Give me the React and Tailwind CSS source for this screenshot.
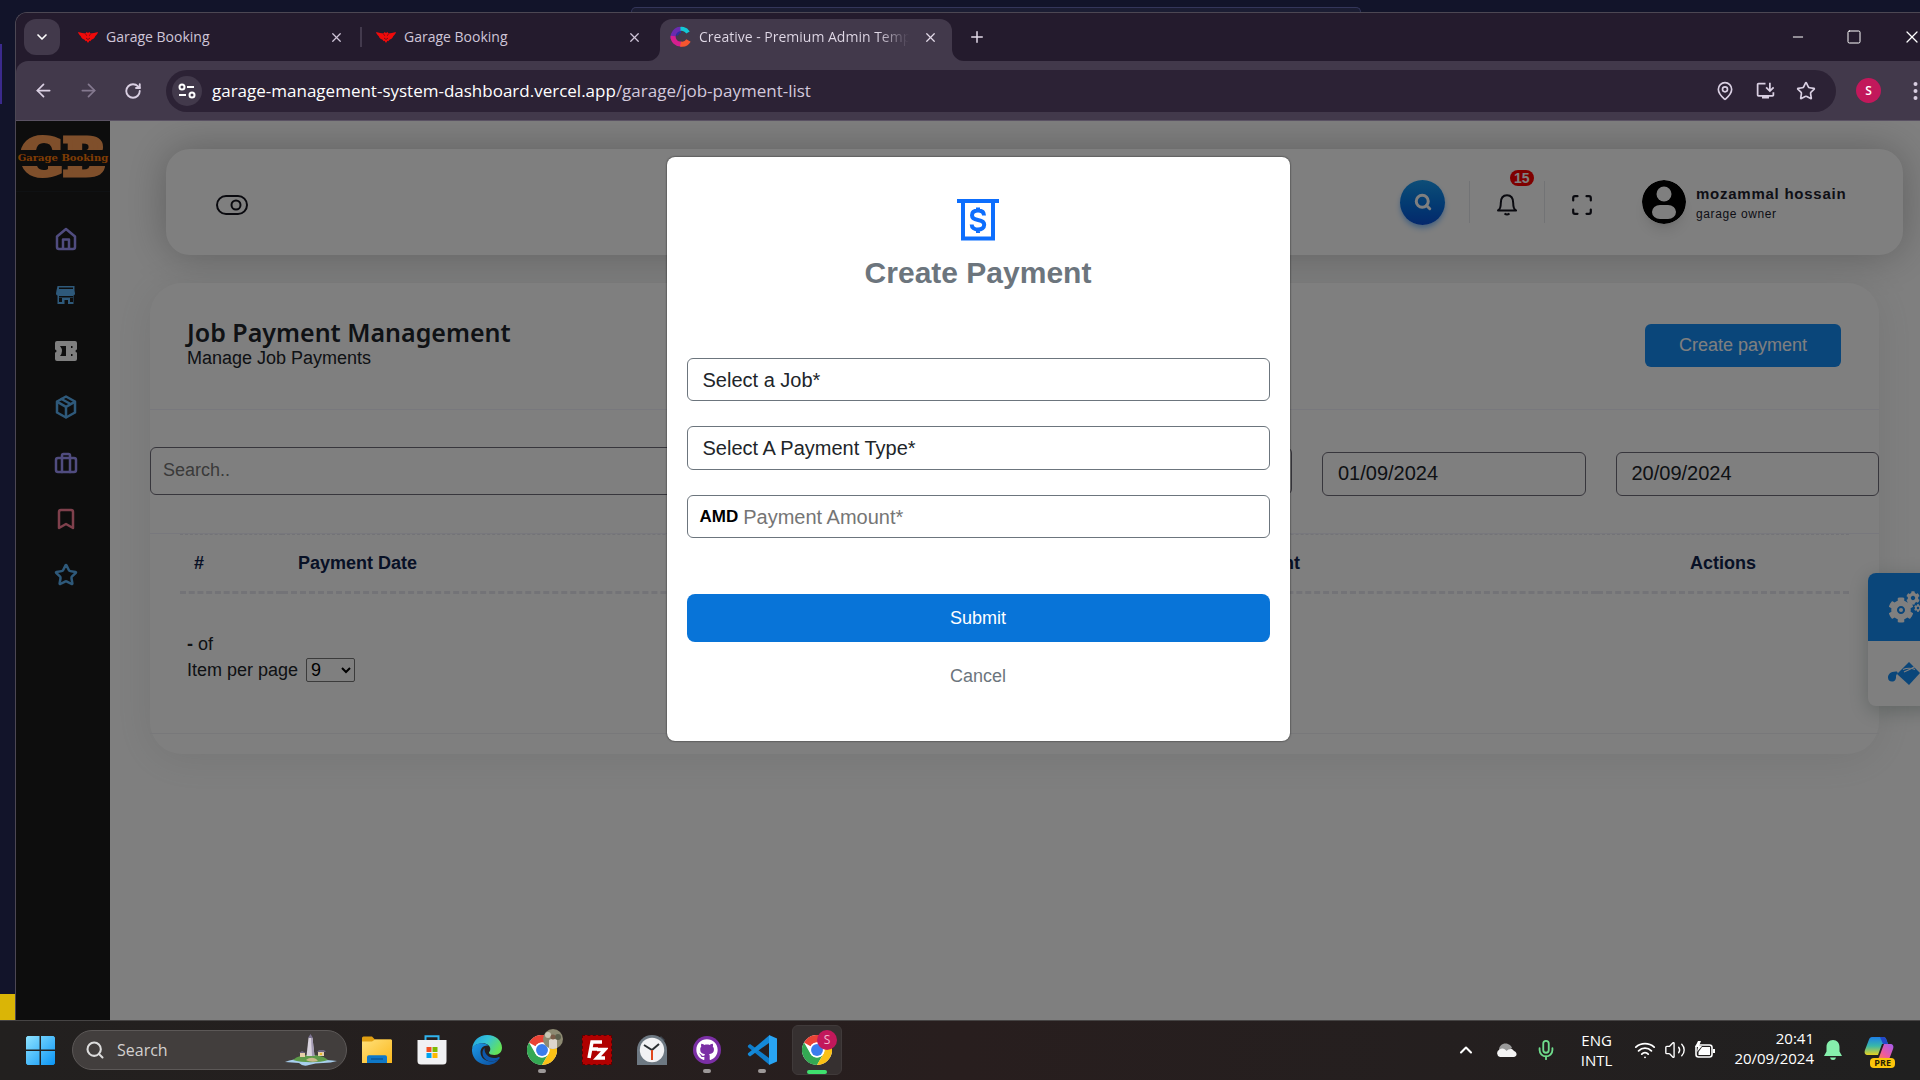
import React from "react";
import {
  ArrowLeft, ArrowRight, RotateCw, X, Plus, ChevronDown, ChevronUp, MapPin, Star, Minus, Square,
  Search, Bookmark, Mic, Volume2, Wifi,
} from "lucide-react";
import { FaGithub, FaCog } from "react-icons/fa";
import { MdOutlineInstallDesktop } from "react-icons/md";

const UI = "font-['Open_Sans',sans-serif]";
const PAGE = "font-['Liberation_Sans',Arial,sans-serif]";

/* ---------- brand marks ---------- */

function WingsMark() {
  return (
    <svg width="20" height="12" viewBox="0 0 20 12" fill="#f00a0a" aria-hidden="true">
      <path d="M0 1c3 1 5.500 1.200 7.500 1.500L8.500 1l1.500 1 1.500-1 1 1.500C14.500 2.200 17 2 20 1c-.6 2-1.600 3.400-3 4.500.2.600-1 1.800-2 2.500l-1.600.8-1 1.500-.9-.5L10 12l-1.500-2.200-.9.5-1-1.500L5 8C4 7.300 2.800 6.100 3 5.500 1.600 4.400.6 3 0 1z" />
      <path d="M7.500 3.500l1.500 1M12.500 3.500l-1.500 1M8 7l2 1.500L12 7" stroke="#5a0a14" strokeWidth="0.8" fill="none" />
    </svg>
  );
}

function CreativeMark() {
  return (
    <svg width="21" height="24" viewBox="0 0 21 21" fill="none" aria-hidden="true">
      <path d="M18 6A7.500 7.500 0 0 0 7.500 3.500" stroke="#12c9d6" strokeWidth="4" />
      <path d="M10.500 2.800A7.800 7.800 0 0 0 3.200 12" stroke="#6a2bb0" strokeWidth="5" />
      <path d="M3 9.500a7.500 7.500 0 0 0 8.500 8" stroke="#d61f8f" strokeWidth="5" />
      <path d="M10.500 17.500a7.500 7.500 0 0 0 8-3.500" stroke="#f5562f" strokeWidth="5" />
      <path d="M7 9c.5-2 2-3.200 4-3.400" stroke="#2b2fa0" strokeWidth="2" />
    </svg>
  );
}

function ChromeMark() {
  return (
    <svg width="30" height="30" viewBox="0 0 48 48" aria-hidden="true">
      <circle cx="24" cy="24" r="24" fill="#fff" />
      <path d="M3.200 12A24 24 0 0 1 44.800 12H24a12 12 0 0 0-10.400 6z" fill="#ea4335" />
      <path d="M3.200 12A24 24 0 0 0 24 48l10.400-18A12 12 0 0 1 13.600 30z" fill="#34a853" />
      <path d="M44.800 12A24 24 0 0 1 24 48l10.400-18A12 12 0 0 0 34.400 18 12 12 0 0 0 24 12z" fill="#fbc116" />
      <circle cx="24" cy="24" r="12" fill="#fff" />
      <circle cx="24" cy="24" r="9.500" fill="#3b7ded" />
    </svg>
  );
}

function WindowsMark() {
  return (
    <svg width="29" height="29" viewBox="0 0 30 30" aria-hidden="true">
      <defs>
        <linearGradient id="win" x1="0" y1="0" x2="1" y2="1">
          <stop offset="0" stopColor="#8fe3ff" />
          <stop offset="1" stopColor="#0a95f5" />
        </linearGradient>
      </defs>
      <path d="M1.500 0H14v14H0V1.500zM15.500 0H28.500L30 1.500V14H15.500zM0 15.500h14V30H1.500L0 28.500zM15.500 15.500H30v13L28.500 30h-13z" fill="url(#win)" />
    </svg>
  );
}

function FolderMark() {
  return (
    <svg width="30" height="28" viewBox="0 0 30 28" aria-hidden="true">
      <defs>
        <linearGradient id="fold" x1="0" y1="0" x2="1" y2="1">
          <stop offset="0" stopColor="#ffe07a" />
          <stop offset="1" stopColor="#fbb81c" />
        </linearGradient>
      </defs>
      <path d="M0 2a1.500 1.500 0 0 1 1.500-1.500H10l3 3h16V10H0z" fill="#e09f12" />
      <path d="M0 5.500h10l3-2h16a1 1 0 0 1 1 1V27H0z" fill="url(#fold)" />
      <path d="M5 21a1.800 1.800 0 0 1 1.800-1.800h16.400A1.800 1.800 0 0 1 25 21v6H5z" fill="#0f78c8" />
      <path d="M9 23h12" stroke="#0a4f8c" strokeWidth="1.200" />
    </svg>
  );
}

function StoreMark() {
  return (
    <svg width="30" height="30" viewBox="0 0 30 30" aria-hidden="true">
      <path d="M8.500 6V1.200h13V6" fill="none" stroke="#30b4ee" strokeWidth="2" />
      <path d="M.5 5h29v21a3.500 3.500 0 0 1-3.500 3.500H4A3.500 3.500 0 0 1 .5 26z" fill="#f1f1f3" />
      <path d="M9.500 12h5v5h-5z" fill="#f25022" />
      <path d="M15.500 12h5v5h-5z" fill="#7fba00" />
      <path d="M9.500 18h5v5h-5z" fill="#00a4ef" />
      <path d="M15.500 18h5v5h-5z" fill="#ffb900" />
    </svg>
  );
}

function EdgeMark() {
  return (
    <svg width="30" height="30" viewBox="0 0 30 30" aria-hidden="true">
      <defs>
        <linearGradient id="edgeTop" x1="0" y1="0" x2="1" y2="0.5">
          <stop offset="0" stopColor="#1f9fe0" />
          <stop offset="0.5" stopColor="#35c3d8" />
          <stop offset="1" stopColor="#63e25a" />
        </linearGradient>
        <linearGradient id="edgeLow" x1="0" y1="0" x2="1" y2="1">
          <stop offset="0" stopColor="#1d9be8" />
          <stop offset="1" stopColor="#0a4a9c" />
        </linearGradient>
      </defs>
      <path d="M0 14C1 5.500 7 0 15.200 0 24 0 30 6 30 12.800c0 4.500-3.200 7.200-7.500 7.200-3 0-5.500-1-5.500-2.300 0-.9 1.300-1.200 1.300-3.700 0-3.300-3.200-5.800-7.500-5.800C5.500 8.200 1.500 10.500 0 14z" fill="url(#edgeTop)" />
      <path d="M0 14c1.500-3.800 5.500-5.800 10-5.800 3 0 5.300 1 6.600 2.400C12 10 8.500 13 8.500 17c0 6 5 9.500 10.500 9.500 3 0 5.500-.8 8-2.500C24.500 27.800 20.300 30 15.500 30 6.500 30-.6 23 0 14z" fill="url(#edgeLow)" />
      <path d="M12.500 13c-1.400 1.400-2 3-2 5 0 5.500 5 9 10 8.300 2.500-.3 4.800-1.200 6.800-2.600 1-.7.300-2-1-1.500-7 2.700-14-1.400-13.800-9.200z" fill="#0d57ab" />
    </svg>
  );
}

function ClockMark() {
  return (
    <svg width="30" height="30" viewBox="0 0 30 30" aria-hidden="true">
      <path d="M24 1l4 4-3 3-4-4z" fill="#3c434b" />
      <path d="M0 30V15a15 15 0 0 1 30 0v15z" fill="#6d7882" />
      <circle cx="15" cy="15" r="12.200" fill="#f2f2f4" />
      <path d="M7 10l8 5 7-6" fill="none" stroke="#2b2f33" strokeWidth="2" />
      <path d="M15 15v10" stroke="#e0461c" strokeWidth="2" />
    </svg>
  );
}

function CodeMark() {
  return (
    <svg width="30" height="30" viewBox="0 0 30 30" aria-hidden="true">
      <path d="M1 10.500l2-1.500L22 23v6.500L.8 12z" fill="#0f7dcb" />
      <path d="M.8 18.500L22 .5V8L3 21.500l-2-1.500z" fill="#1489d8" />
      <path d="M22 0l8 3.500v23L22 30z" fill="#29a5f4" />
    </svg>
  );
}

function IslandMark() {
  return (
    <svg width="54" height="32" viewBox="0 0 54 32" aria-hidden="true">
      <path d="M1 28q10-4 27-3t25 2q-6 2-14 2t-14 2-10-2z" fill="#a8cfee" />
      <path d="M9 26c4-4 10-5 18-5s14 2 17 5c-8 3-26 3-35 0z" fill="#5e9a4a" />
      <path d="M22 26c4-3 9-3 12 1-4 1-9 1-12-1z" fill="#c9b98a" />
      <path d="M24.500 4h4l2 18h-8z" fill="#d9d3de" />
      <path d="M27 4h1.500l2 18H28z" fill="#a39ab3" />
      <path d="M24 4l2.500-4L29 4z" fill="#7c7390" />
      <path d="M16 19h5v4h-5zM34 18h6v4h-6z" fill="#e6cfa8" />
      <path d="M15 19l3-2 4 2zM33 18l2-2h5l2 2z" fill="#6b6480" />
      <path d="M36 19h2v2h-2z" fill="#e8b92f" />
    </svg>
  );
}

function CopilotMark() {
  return (
    <svg width="30" height="24" viewBox="0 0 30 24" aria-hidden="true">
      <defs>
        <linearGradient id="cpA" x1="0" y1="0" x2="0" y2="1">
          <stop offset="0" stopColor="#1d7fe8" />
          <stop offset="0.5" stopColor="#39b8a8" />
          <stop offset="1" stopColor="#e8d21f" />
        </linearGradient>
        <linearGradient id="cpB" x1="1" y1="0" x2="0" y2="1">
          <stop offset="0" stopColor="#a35cf0" />
          <stop offset="0.6" stopColor="#ef5a9d" />
          <stop offset="1" stopColor="#f98a3c" />
        </linearGradient>
      </defs>
      <path d="M8 1h11c2 0 3 1 3.500 3L24 8h-6l-4 11H4c-3 0-4-2-3-5L5 3.500C5.500 2 6.500 1 8 1z" fill="url(#cpA)" />
      <path d="M16 1h3c2 0 3 1 3.500 3L24 8h-5z" fill="#2348c8" />
      <path d="M20 8h6c3 0 4 2 3 5l-3 8c-.5 1.500-1.500 2-3 2H12c2 0 3-1 3.500-3z" fill="url(#cpB)" />
    </svg>
  );
}

/* ---------- browser frame ---------- */

function Tab({ icon, title, divider }) {
  return (
    <div className="flex w-[298px] shrink-0 items-center pl-3.5 text-[#cfc5d8]">
      <span className="flex w-5 justify-center">{icon}</span>
      <span className="ml-2 flex-1 truncate text-sm">{title}</span>
      <button aria-label={"Close " + title} className="mr-4 flex"><X size={15} strokeWidth={2} /></button>
      <span className={divider ? "h-5 w-0.5 bg-[#433a4d]" : "h-5 w-0.5"} />
    </div>
  );
}

function TabStrip() {
  return (
    <div className={"flex h-12 items-stretch bg-[#241b2d] " + UI}>
      <button aria-label="Search tabs" className="my-1.5 ml-2 flex w-9 items-center justify-center rounded-xl bg-[#42394b] text-white">
        <ChevronDown size={16} strokeWidth={2.5} />
      </button>
      <div className="w-1" />
      <Tab icon={<WingsMark />} title="Garage Booking" divider />
      <Tab icon={<WingsMark />} title="Garage Booking" />
      <div className="relative mt-1.5 flex w-[292px] shrink-0 items-center rounded-t-xl bg-[#42394b] pb-1.5 pl-2.5 pr-3.5 text-[#e2dae8]">
        <svg className="absolute bottom-0 -left-3" width="12" height="12" aria-hidden="true"><path d="M12 0v12H0A12 12 0 0 0 12 0z" fill="#42394b" /></svg>
        <svg className="absolute bottom-0 -right-3" width="12" height="12" aria-hidden="true"><path d="M0 0v12h12A12 12 0 0 1 0 0z" fill="#42394b" /></svg>
        <CreativeMark />
        <span className="ml-2 w-[210px] overflow-hidden whitespace-nowrap bg-linear-to-r from-[#e2dae8] from-85% to-transparent bg-clip-text text-sm text-transparent">
          Creative - Premium Admin Temp
        </span>
        <button aria-label="Close tab" className="ml-auto flex"><X size={15} strokeWidth={2} /></button>
      </div>
      <button aria-label="New tab" className="ml-4 flex items-center text-[#e2dae8]"><Plus size={18} strokeWidth={2} /></button>
      <div className="ml-auto flex items-center gap-10 pr-[18px] text-white">
        <button aria-label="Minimize"><Minus size={16} strokeWidth={1.5} /></button>
        <button aria-label="Maximize"><Square size={16} strokeWidth={1.5} /></button>
        <button aria-label="Close window"><X size={20} strokeWidth={1.5} /></button>
      </div>
    </div>
  );
}

function Toolbar() {
  return (
    <div className={"flex h-[60px] items-center rounded-tl-xl border-b border-[#5a5263] bg-[#42394b] pl-[17px] pr-[22px] text-[#d9cfe2] " + UI}>
      <button aria-label="Back"><ArrowLeft size={21} /></button>
      <button aria-label="Forward" className="ml-6 text-[#84798f]"><ArrowRight size={21} /></button>
      <button aria-label="Reload" className="ml-[25px]"><RotateCw size={18} strokeWidth={2.5} /></button>
      <div className="ml-6 flex h-[42px] flex-1 items-center rounded-full bg-[#2c2235] pl-1.5 pr-5">
        <button aria-label="Site information" className="flex h-[30px] w-[30px] items-center justify-center rounded-full bg-[#42394b]">
          <svg width="18" height="16" viewBox="0 0 18 16" fill="none" stroke="#fff" strokeWidth="2" aria-hidden="true">
            <circle cx="4" cy="4" r="2.500" /><path d="M9 4h7M1 12h7" /><circle cx="14" cy="12" r="2.500" />
          </svg>
        </button>
        <span className="ml-2.5 flex-1 text-[17px] text-white">
          garage-management-system-dashboard.vercel.app<span className="text-[#d3c9dc]">/garage/job-payment-list</span>
        </span>
        <span className="flex items-center gap-5">
          <MapPin size={20} /><MdOutlineInstallDesktop size={21} /><Star size={20} />
        </span>
      </div>
      <span className="ml-5 flex h-[25px] w-[25px] items-center justify-center rounded-full bg-[#c2185b] text-xs font-semibold text-white">S</span>
      <button aria-label="Browser menu" className="ml-8">
        <svg width="5" height="18" viewBox="0 0 5 18" fill="#d9cfe2" aria-hidden="true"><circle cx="2.500" cy="2" r="2" /><circle cx="2.500" cy="9" r="2" /><circle cx="2.500" cy="16" r="2" /></svg>
      </button>
    </div>
  );
}

/* ---------- page ---------- */

function Line({ children, color }) {
  return (
    <svg width="24" height="24" viewBox="0 0 24 24" fill="none" stroke={color} strokeWidth="2.500" strokeLinecap="round" strokeLinejoin="round" aria-hidden="true">
      {children}
    </svg>
  );
}

const sideLinks = [
  ["Dashboard", <Line color="#a098ff"><path d="M3 9.500L12 2l9 7.500V20a2 2 0 0 1-2 2H5a2 2 0 0 1-2-2z" /><path d="M9 21v-8.500h6V21" /></Line>],
  ["Garage", <svg width="20" height="20" viewBox="0 0 20 20" aria-hidden="true"><path d="M1.500 1h17v4.500l.5 3c0 1-.6 1.800-1.500 2V19H12v-4H8.500v4H1.500v-8.500C.6 10.300 0 9.500 0 8.500l.5-3z" fill="#5cb2f5" /><path d="M3 2.500h14V4H3zM3 11h14v1.500H3zM3 13h3v4H3zM14 13h3v4h-3z" fill="#1a1a1a" /></svg>],
  ["Tickets", <svg width="22" height="20" viewBox="0 0 22 20" aria-hidden="true"><path d="M2 0h18a2 2 0 0 1 2 2v6.500a1.500 1.500 0 0 0 0 3V18a2 2 0 0 1-2 2H2a2 2 0 0 1-2-2v-6.500a1.500 1.500 0 0 0 0-3V2a2 2 0 0 1 2-2z" fill="#fff" /><path d="M5 5h6v10H5q4-5 0-10zM16 5h1.500v2H16zM16 13h1.500v2H16z" fill="#1a1a1a" /></svg>],
  ["Products", <Line color="#5cb2f5"><path d="M12 1.500l9 5v11l-9 5-9-5v-11z" /><path d="M3.300 6.800L12 11.800l8.700-5M12 22V12M7.500 4l9 5" /></Line>],
  ["Jobs", <Line color="#a098ff"><rect x="2" y="7" width="20" height="14" rx="2" /><path d="M8 21V4.500A1.500 1.500 0 0 1 9.500 3h5A1.500 1.500 0 0 1 16 4.500V21" /></Line>],
  ["Bookmarks", <Bookmark size={24} strokeWidth={2.5} color="#ff8098" />],
  ["Favourites", <Star size={24} strokeWidth={2.5} color="#5cb2f5" />],
];

function Sidebar() {
  return (
    <aside className="w-[94px] shrink-0 bg-[#1a1a1a]">
      <a href="#home" aria-label="Garage Booking home" className="relative flex h-[71px] items-center justify-center overflow-hidden border-b border-[#1e2326] pt-1 font-['DejaVu_Serif',serif] text-[50px] font-bold leading-none text-[#ff9e56] [-webkit-text-stroke:5px_#ff9e56]">
        GB
        <span className="absolute inset-x-0 top-[29px] bg-[#1a1a1a] text-center text-[10px] leading-[16px] text-[#ff7a08] [-webkit-text-stroke:0]">Garage Booking</span>
      </a>
      <nav className="flex flex-col items-center gap-8 pl-1.5 pt-[35px]">
        {sideLinks.map(([name, icon]) => (
          <a key={name} href={"#" + name} aria-label={name} className="flex h-6 w-6 items-center justify-center">{icon}</a>
        ))}
      </nav>
    </aside>
  );
}

function TopCard() {
  return (
    <header className="ml-14 mr-[37px] mt-7 flex h-[106px] items-center rounded-3xl bg-white pl-[50px] pr-[50px] shadow-[0_0_40px_rgba(40,40,40,0.3)]">
      <button aria-label="Toggle menu" className="pt-1.5">
        <svg width="32" height="20" viewBox="0 0 32 20" fill="none" stroke="#15151f" strokeWidth="2" aria-hidden="true">
          <rect x="1" y="1" width="30" height="18" rx="9" /><circle cx="20" cy="10" r="4.500" />
        </svg>
      </button>
      <div className="ml-auto flex items-center">
        <button aria-label="Search" className="flex h-[45px] w-[45px] items-center justify-center rounded-full bg-linear-to-b from-[#1c9cf0] to-[#0b50d8] text-white shadow-md shadow-blue-300">
          <Search size={18} strokeWidth={4} />
        </button>
        <span className="ml-6 h-[42px] w-px bg-gray-200" />
        <button aria-label="Notifications, 15 new" className="relative flex w-[74px] justify-center pt-1.5">
          <svg width="20" height="22" viewBox="0 0 20 22" fill="none" stroke="#15151f" strokeWidth="2" aria-hidden="true">
            <path d="M1 16.500c2-1 2.800-3 2.800-7.500C3.800 4 6 1.200 10 1.200S16.200 4 16.200 9c0 4.500.8 6.500 2.800 7.500z" strokeLinejoin="round" />
            <path d="M7.500 19.500q2.500 2 5 0" />
          </svg>
          <span className="absolute -top-[18px] left-10 rounded-full bg-[#ff0000] px-1 text-sm font-semibold leading-4 text-white">15</span>
        </button>
        <span className="h-[42px] w-px bg-gray-200" />
        <button aria-label="Full screen" className="ml-[27px] pt-1.5">
          <svg width="20" height="20" viewBox="0 0 20 20" fill="none" stroke="#15151f" strokeWidth="2.200" strokeLinecap="round" aria-hidden="true">
            <path d="M1.200 5.500V3q0-1.800 1.800-1.800h2.500M14.500 1.200H17q1.800 0 1.800 1.800v2.500M18.800 14.500V17q0 1.800-1.800 1.800h-2.500M5.500 18.800H3q-1.800 0-1.800-1.800v-2.500" />
          </svg>
        </button>
        <svg className="ml-[50px] rounded-full shadow-lg" width="44" height="44" viewBox="0 0 44 44" aria-hidden="true">
          <circle cx="22" cy="22" r="22" fill="#000" /><circle cx="22" cy="14" r="7.500" fill="#fff" /><rect x="10" y="25" width="24" height="14" rx="8" fill="#fff" />
        </svg>
        <div className="ml-2.5 w-[157px] pt-1 text-[#20202c]">
          <p className="text-[15px] font-bold leading-5 tracking-wider">mozammal hossain</p>
          <p className="text-xs font-medium leading-5 tracking-wider">garage owner</p>
        </div>
      </div>
    </header>
  );
}

function PaymentCard() {
  const field = "h-11 min-w-0 flex-1 rounded-md border border-[#6f6c78] bg-white px-[15px] text-xl text-[#20242a]";
  return (
    <section className="ml-10 mr-[61px] mt-7 rounded-[32px] bg-white shadow-[0_5px_40px_rgba(90,100,95,0.12)]">
      <div className="flex h-[127px] items-center justify-between border-b border-[#f0f0fa] pl-[37px] pr-[38px]">
        <div className="pb-1">
          <h1 className="font-['Noto_Sans',sans-serif] text-[25px] font-semibold leading-7 text-[#20242a]">Job Payment Management</h1>
          <p className="text-lg leading-6 text-[#20242a]">Manage Job Payments</p>
        </div>
        <button className="mb-0.5 h-[43px] w-[196px] rounded-md bg-[#148cf5] text-lg text-white">Create payment</button>
      </div>
      <div className="flex h-[124px] items-center gap-[30px] border-b border-[#f0f0fa] pt-1">
        <input aria-label="Search" placeholder="Search.." className="mb-1.5 h-12 w-[1142px] rounded-md border border-[#6f6c78] px-3 text-lg placeholder:text-[#757575]" />
        <input aria-label="From date" defaultValue="01/09/2024" className={field} />
        <input aria-label="To date" defaultValue="20/09/2024" className={field} />
      </div>
      <div className="px-[30px]">
        <table className="w-full table-fixed border-t border-dashed border-[#e6e6ee] text-left text-lg text-[#10234c]">
          <thead>
            <tr className="h-[58px] border-b-3 border-dashed border-[#e6e6ee] align-middle">
              <th className="w-[102px] pl-3.5">#</th>
              <th className="w-[934px] pl-4">Payment Date</th>
              <th className="pl-4">Amount</th>
              <th className="w-[252px] text-center">Actions</th>
            </tr>
          </thead>
        </table>
      </div>
      <div className="border-b border-[#f0f0f4] px-[37px] pb-[50px] pt-[37px] text-lg text-[#20242a]">
        <p className="leading-[26px]"><b>-</b> of</p>
        <label className="flex items-center gap-2 leading-[26px]">
          Item per page
          <select defaultValue="9" className="h-6 w-[49px] rounded-xs border border-[#767676] bg-white text-lg leading-5 text-black">
            <option>9</option>
            <option>18</option>
          </select>
        </label>
      </div>
      <div className="h-5" />
    </section>
  );
}

function SidePanel() {
  return (
    <div className="absolute right-0 top-[452px] w-[72px] overflow-hidden rounded-l-lg bg-white shadow-[0_5px_20px_rgba(60,90,80,0.3)]">
      <button aria-label="Settings" className="flex h-[68px] w-full items-center bg-[#148cf5] pl-5 text-white">
        <svg width="36" height="34" viewBox="0 0 36 34" aria-hidden="true">
          <FaCog x="0" y="7" size={26} />
          <circle cx="13" cy="20" r="2" fill="#fff" />
          <FaCog x="18" y="1" size={14} />
          <FaCog x="26" y="14" size={8} />
        </svg>
      </button>
      <button aria-label="Theme colours" className="flex h-[65px] w-full items-center pl-5">
        <svg width="36" height="24" viewBox="0 0 36 24" aria-hidden="true">
          <path d="M21 0l11 11-11 12L9 12l3-3z" fill="#148cf5" />
          <path d="M9 9.500C3 9 0 12 0 15.500 0 18 1.500 19.500 4 19.500c3 0 4-2 4-4.500 0-2 .5-3 2-3.500z" fill="#148cf5" />
          <path d="M15 7.500q6-2.500 12 0M16 10q6-2.500 11-5.500" stroke="#fff" strokeWidth="1.200" fill="none" />
        </svg>
      </button>
    </div>
  );
}

function PaymentDialog() {
  const box = "block w-full rounded-md border border-[#6c757d] bg-white text-xl text-[#212529]";
  return (
    <div className="absolute inset-0 z-10 flex items-start justify-center bg-black/50 pt-9">
      <form role="dialog" aria-label="Create Payment" onSubmit={(e) => e.preventDefault()} className="flex w-[623px] flex-col rounded-lg bg-white px-5 pb-[51px] pt-[42px] shadow-[0_0_2px_rgba(0,0,0,0.8)]">
        <svg className="self-center" width="42" height="42" viewBox="0 0 42 42" fill="none" stroke="#0d6efd" strokeWidth="4" aria-hidden="true">
          <path d="M0 2h42M6 2v37.500h30V2" />
          <path d="M27 16.500c0-3.500-2.500-5-6-5s-6 1.500-6 4.700c0 3 2.500 4.200 6 4.800s6.200 1.600 6.200 4.800c0 3-2.700 4.700-6.200 4.700s-6.300-1.700-6.300-5M21 8.500v4M21 30v4" strokeWidth="4" />
        </svg>
        <h2 className="mt-3.5 text-center text-[30px] font-bold leading-9 text-[#6c757d]">Create Payment</h2>
        <div className="mt-[67px] flex flex-col gap-[25px]">
          <select aria-label="Job" className={"h-[43px] appearance-none px-[15px] " + box}><option>Select a Job*</option></select>
          <select aria-label="Payment type" className={"h-11 appearance-none px-[15px] " + box}><option>Select A Payment Type*</option></select>
          <label className={"flex h-[43px] items-center pl-3 " + box}>
            <span className="flex h-full items-center gap-[5px]">
              <b className="text-[17px] text-black">AMD</b>
              <input aria-label="Payment amount" placeholder="Payment Amount*" className="w-[500px] outline-none placeholder:text-[#757575]" />
            </span>
          </label>
        </div>
        <button type="submit" className="mt-14 h-12 rounded-lg bg-[#0874d8] text-lg font-medium text-white">Submit</button>
        <button type="button" className="mt-5 self-center text-lg leading-7 text-[#6c757d]">Cancel</button>
      </form>
    </div>
  );
}

/* ---------- taskbar ---------- */

function TaskbarApp({ name, children, dot }) {
  return (
    <button aria-label={name} className="relative flex h-full w-[55px] shrink-0 items-center justify-center">
      {children}
      {dot && <span className="absolute bottom-1.5 h-1 w-2 rounded-full bg-[#9c9898]" />}
    </button>
  );
}

function Taskbar() {
  return (
    <footer className={"flex h-[60px] shrink-0 items-center border-t border-[#464444] bg-linear-to-r from-[#22201f] via-[#281e1e] to-[#202020] pb-px text-white " + UI}>
      <button aria-label="Start" className="ml-[26px]"><WindowsMark /></button>
      <label className="ml-[17px] flex h-10 w-[275px] items-center rounded-full border border-[#5c5857] bg-[#423e3d] pl-3 pr-2">
        <Search size={20} strokeWidth={2.5} color="#dcdcdc" />
        <input aria-label="Search Windows" placeholder="Search" className="ml-3 w-0 flex-1 text-base outline-none placeholder:text-[#d2d0cf]" />
        <IslandMark />
      </label>
      <div className="ml-0.5 flex h-full">
        <TaskbarApp name="File Explorer"><FolderMark /></TaskbarApp>
        <TaskbarApp name="Microsoft Store"><StoreMark /></TaskbarApp>
        <TaskbarApp name="Edge"><EdgeMark /></TaskbarApp>
        <TaskbarApp name="Chrome, first profile" dot>
          <ChromeMark />
          <svg className="absolute right-1.5 top-2" width="20" height="20" viewBox="0 0 20 20" aria-hidden="true">
            <circle cx="10" cy="10" r="10" fill="#8d8a72" /><circle cx="5" cy="6" r="3" fill="#c9c6b4" /><circle cx="15" cy="8" r="3" fill="#5c5f4c" /><path d="M6 19v-8q4-3 8 0v8q-4 2-8 0z" fill="#ddd6cc" /><circle cx="10" cy="8" r="2.500" fill="#7a5c48" />
          </svg>
        </TaskbarApp>
        <TaskbarApp name="FileZilla">
          <span className="flex h-[30px] w-[30px] items-center justify-center border border-dashed border-[#5e0000] bg-[#b00000]">
            <svg width="22" height="22" viewBox="0 0 22 22" fill="none" stroke="#fff" strokeWidth="3.500" aria-hidden="true"><path d="M3 19L6 3h10M5 10h7M11 10.500h8l-8 8.500h8" /></svg>
          </span>
        </TaskbarApp>
        <TaskbarApp name="Clock"><ClockMark /></TaskbarApp>
        <TaskbarApp name="GitHub Desktop" dot>
          <span className="flex h-7 w-7 items-center justify-center rounded-full bg-[#7b2fa5]"><FaGithub size={22} /></span>
        </TaskbarApp>
        <TaskbarApp name="Visual Studio Code" dot><CodeMark /></TaskbarApp>
        <button aria-label="Chrome, second profile" className="relative my-1 ml-[3px] flex w-[50px] items-center justify-center rounded-md border border-[#403a3a] bg-[#363030]">
          <ChromeMark />
          <span className="absolute right-1 top-1 flex h-5 w-5 items-center justify-center rounded-full bg-[#c2185b] text-xs text-[#f3b8d0]">S</span>
          <span className="absolute bottom-0 h-1 w-5 rounded-full bg-[#3fe06e]" />
        </button>
      </div>
      <div className="ml-auto flex items-center pr-[26px]">
        <ChevronUp size={20} strokeWidth={2.5} />
        <svg className="ml-5" width="21" height="14" viewBox="0 0 21 14" aria-hidden="true">
          <path d="M3 7c0-4 3-6.500 6.500-6.500S15.500 3 16 5l-7 5z" fill="#9a9a9a" /><path d="M4 14a4 4 0 0 1-.5-7.500C6 4.500 9 5.500 10.500 8c2-2.500 6-3 7.500 0 3 .5 4 6-.5 6z" fill="#f4f4f4" />
        </svg>
        <span className="ml-[18px]"><Mic size={22} color="#6fdc8c" /></span>
        <p className="ml-6 text-center text-[15px] leading-5">ENG<br />INTL</p>
        <span className="ml-[22px] flex items-center gap-2">
          <Wifi size={22} /><Volume2 size={22} strokeWidth={1.5} />
          <svg width="22" height="18" viewBox="0 0 22 18" aria-hidden="true">
            <rect x="2" y="4" width="16" height="12" rx="2.500" fill="none" stroke="#fff" strokeWidth="1.600" /><path d="M8 6h8v8H4.500v-3z" fill="#fff" /><path d="M19 8h2v4h-2z" fill="#fff" /><path d="M4 0L1 6h3l-1 5 5-6H5l2-5z" fill="#fff" />
          </svg>
        </span>
        <p className="ml-[18px] pb-1 text-right text-[15px] leading-5">20:41<br />20/09/2024</p>
        <svg className="ml-2.5" width="18" height="20" viewBox="0 0 18 20" fill="#86efac" aria-hidden="true"><path d="M9 0c4 0 6.500 3 6.500 7v4.500L18 16H0l2.500-4.500V7C2.500 3 5 0 9 0zM6 17.500h6Q11.500 20 9 20t-3-2.500z" /></svg>
        <span className="relative ml-[22px] flex pb-1">
          <CopilotMark />
          <span className="absolute -bottom-1 -right-px rounded-sm bg-[#fdc50b] px-1 text-[9px] font-bold leading-[10px] text-[#2a2000]">PRE</span>
        </span>
      </div>
    </footer>
  );
}

export default function App() {
  return (
    <div className="flex h-screen flex-col overflow-hidden bg-[#12142a]">
      <div className="h-3 shrink-0 pt-[7px]">
        <div className="ml-auto mr-[559px] h-[5px] w-[730px] rounded-t-md border border-b-0 border-[#34365a] bg-[#1b1d33]" />
      </div>
      <div className="flex min-h-0 flex-1">
        <div className="flex w-[15px] shrink-0 flex-col">
          <span className="mt-8 h-[60px] w-0.5 bg-[#3b2a8c]" />
          <span className="mt-auto h-[26px] bg-[#dab506]" />
        </div>
        <main className="flex w-[calc(100%+5px)] shrink-0 flex-col overflow-hidden rounded-tl-xl border-l border-t border-[#4c4753] bg-[#241b2d]">
          <TabStrip />
          <Toolbar />
          <div className={"relative flex min-h-0 flex-1 overflow-hidden bg-white " + PAGE}>
            <Sidebar />
            <div className="min-w-0 flex-1 overflow-hidden">
              <TopCard />
              <PaymentCard />
            </div>
            <SidePanel />
            <PaymentDialog />
          </div>
        </main>
      </div>
      <Taskbar />
    </div>
  );
}
